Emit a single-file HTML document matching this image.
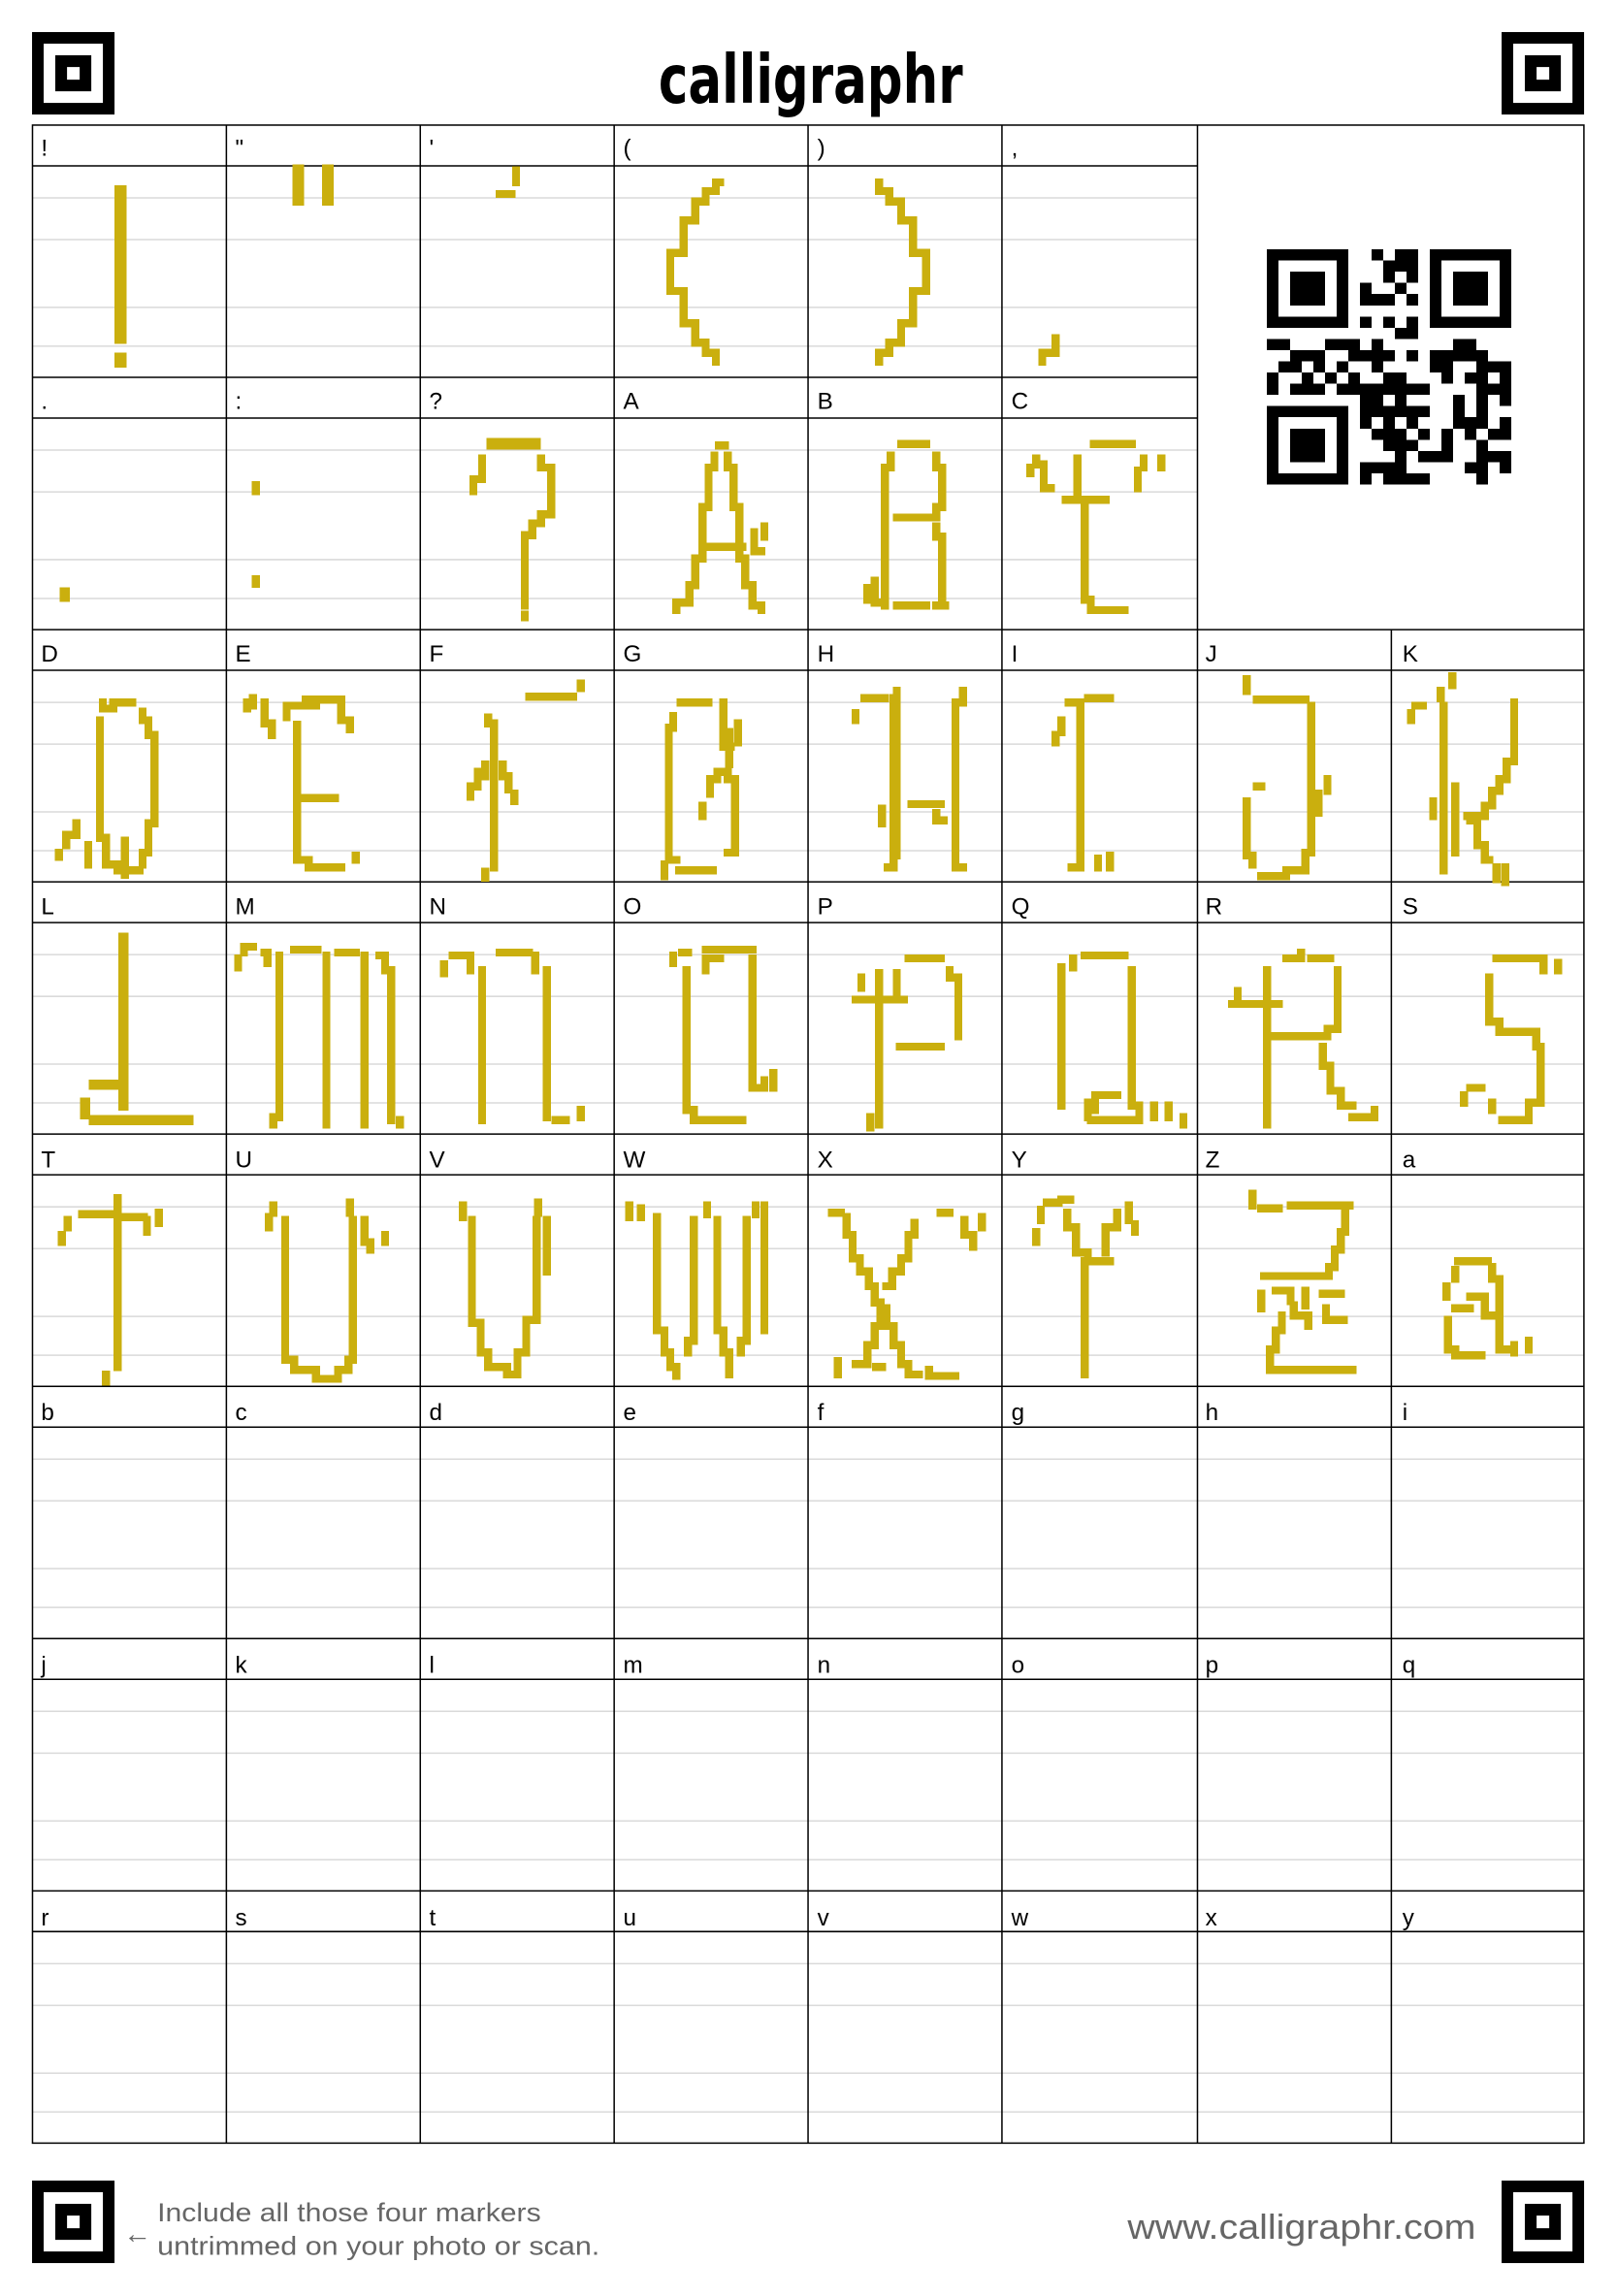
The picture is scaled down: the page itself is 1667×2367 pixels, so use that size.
<!DOCTYPE html>
<html><head><meta charset="utf-8"><style>
html,body{margin:0;padding:0;background:#fff}
svg{display:block}
text{font-family:"Liberation Sans","DejaVu Sans",sans-serif}
</style></head><body>
<svg width="1667" height="2367" viewBox="0 0 1100 1561.9" xmlns="http://www.w3.org/2000/svg">
<defs>
<g id="mk">
<rect x="0" y="0" width="56.1" height="56.1" fill="#000"/>
<rect x="7.9" y="7.9" width="40.3" height="40.3" fill="#fff"/>
<rect x="15.8" y="15.8" width="24.5" height="24.5" fill="#000"/>
<rect x="23.8" y="23.8" width="8.6" height="8.6" fill="#fff"/>
</g>
</defs>
<use href="#mk" x="21.8" y="21.8"/>
<use href="#mk" x="1021.5" y="21.8"/>
<use href="#mk" x="21.8" y="1483.4"/>
<use href="#mk" x="1021.5" y="1483.4"/>

<!-- logo -->
<text x="448" y="70" font-size="46" font-weight="bold" textLength="207" lengthAdjust="spacingAndGlyphs" style="font-family:'DejaVu Sans Condensed','Liberation Sans Narrow',sans-serif">calligraphr</text>

<g stroke="#dadada" stroke-width="1">
<path d="M22.1 134.6H814.6M22.1 163H814.6M22.1 209.1H814.6M22.1 235.5H814.6
M22.1 306.2H814.6M22.1 334.6H814.6M22.1 380.7H814.6M22.1 407.1H814.6
M22.1 477.8H1077.5M22.1 506.2H1077.5M22.1 552.3H1077.5M22.1 578.7H1077.5
M22.1 649.4H1077.5M22.1 677.8H1077.5M22.1 723.9H1077.5M22.1 750.3H1077.5
M22.1 821H1077.5M22.1 849.4H1077.5M22.1 895.5H1077.5M22.1 921.9H1077.5
M22.1 992.6H1077.5M22.1 1021H1077.5M22.1 1067.1H1077.5M22.1 1093.5H1077.5
M22.1 1164.2H1077.5M22.1 1192.6H1077.5M22.1 1238.7H1077.5M22.1 1265.1H1077.5
M22.1 1335.8H1077.5M22.1 1364.2H1077.5M22.1 1410.3H1077.5M22.1 1436.7H1077.5"/>
</g>
<g stroke="#000" stroke-width="1" fill="none">
<rect x="22.1" y="85.1" width="1055.4" height="1372.8"/>
<path d="M22.1 112.8H814.6M22.1 256.7H814.6M22.1 284.4H814.6
M22.1 428.3H1077.5M22.1 456H1077.5M22.1 599.9H1077.5M22.1 627.6H1077.5
M22.1 771.5H1077.5M22.1 799.2H1077.5M22.1 943.1H1077.5M22.1 970.8H1077.5
M22.1 1114.7H1077.5M22.1 1142.4H1077.5M22.1 1286.3H1077.5M22.1 1314H1077.5"/>
<path d="M154 85.1V1457.9M285.9 85.1V1457.9M417.8 85.1V1457.9M549.7 85.1V1457.9M681.6 85.1V1457.9M814.6 85.1V1457.9M946.5 428.3V1457.9"/>
</g>

<g font-size="16" fill="#000">
<text x="28" y="106">!</text><text x="160" y="106">"</text><text x="292" y="106">'</text><text x="424" y="106">(</text><text x="556" y="106">)</text><text x="688" y="106">,</text>
<text x="28" y="278">.</text><text x="160" y="278">:</text><text x="292" y="278">?</text><text x="424" y="278">A</text><text x="556" y="278">B</text><text x="688" y="278">C</text>
<text x="28" y="450">D</text><text x="160" y="450">E</text><text x="292" y="450">F</text><text x="424" y="450">G</text><text x="556" y="450">H</text><text x="688" y="450">I</text><text x="820" y="450">J</text><text x="954" y="450">K</text>
<text x="28" y="622">L</text><text x="160" y="622">M</text><text x="292" y="622">N</text><text x="424" y="622">O</text><text x="556" y="622">P</text><text x="688" y="622">Q</text><text x="820" y="622">R</text><text x="954" y="622">S</text>
<text x="28" y="794">T</text><text x="160" y="794">U</text><text x="292" y="794">V</text><text x="424" y="794">W</text><text x="556" y="794">X</text><text x="688" y="794">Y</text><text x="820" y="794">Z</text><text x="954" y="794">a</text>
<text x="28" y="966">b</text><text x="160" y="966">c</text><text x="292" y="966">d</text><text x="424" y="966">e</text><text x="556" y="966">f</text><text x="688" y="966">g</text><text x="820" y="966">h</text><text x="954" y="966">i</text>
<text x="28" y="1138">j</text><text x="160" y="1138">k</text><text x="292" y="1138">l</text><text x="424" y="1138">m</text><text x="556" y="1138">n</text><text x="688" y="1138">o</text><text x="820" y="1138">p</text><text x="954" y="1138">q</text>
<text x="28" y="1310">r</text><text x="160" y="1310">s</text><text x="292" y="1310">t</text><text x="424" y="1310">u</text><text x="556" y="1310">v</text><text x="688" y="1310">w</text><text x="820" y="1310">x</text><text x="954" y="1310">y</text>
</g>

<svg x="861.8" y="169.6" width="166.3" height="160" viewBox="0 0 21 21" preserveAspectRatio="none" shape-rendering="crispEdges">
<g fill="#000">
<path d="M0 0h7v7h-7zM1 1v5h5v-5zM2 2h3v3h-3z" fill-rule="evenodd"/>
<path d="M14 0h7v7h-7zM15 1v5h5v-5zM16 2h3v3h-3z" fill-rule="evenodd"/>
<path d="M0 14h7v7h-7zM1 15v5h5v-5zM2 16h3v3h-3z" fill-rule="evenodd"/>
<path d="M9 0h1v1h-1zM11 0h2v1h-2zM10 1h3v1h-3zM10 2h1v1h-1zM12 2h1v1h-1zM8 3h1v1h-1zM11 3h1v1h-1zM8 4h3v1h-3zM12 4h1v1h-1z
M8 6h1v1h-1zM10 6h1v1h-1zM12 6h1v1h-1zM11 7h2v1h-2z
M0 8h2v1h-2zM5 8h3v1h-3zM9 8h1v1h-1zM16 8h2v1h-2z
M2 9h3v1h-3zM7 9h4v1h-4zM12 9h1v1h-1zM14 9h5v1h-5z
M1 10h2v1h-2zM4 10h1v1h-1zM6 10h1v1h-1zM9 10h1v1h-1zM14 10h2v1h-2zM18 10h3v1h-3z
M0 11h1v1h-1zM3 11h1v1h-1zM5 11h1v1h-1zM7 11h1v1h-1zM10 11h2v1h-2zM15 11h1v1h-1zM17 11h2v1h-2zM20 11h1v1h-1z
M0 12h1v1h-1zM2 12h3v1h-3zM6 12h8v1h-8zM18 12h3v1h-3z
M8 13h2v1h-2zM11 13h1v1h-1zM16 13h1v1h-1zM18 13h1v1h-1zM20 13h1v1h-1z
M8 14h6v1h-6zM16 14h1v1h-1zM18 14h1v1h-1z
M8 15h1v1h-1zM10 15h1v1h-1zM12 15h1v1h-1zM16 15h3v1h-3zM20 15h1v1h-1z
M9 16h3v1h-3zM13 16h1v1h-1zM15 16h1v1h-1zM17 16h1v1h-1zM19 16h2v1h-2z
M10 17h3v1h-3zM15 17h1v1h-1zM18 17h1v1h-1z
M11 18h1v1h-1zM13 18h3v1h-3zM18 18h3v1h-3z
M8 19h4v1h-4zM17 19h2v1h-2zM20 19h1v1h-1z
M8 20h1v1h-1zM10 20h4v1h-4zM18 20h1v1h-1z"/>
</g>
</svg>

<g fill="none" stroke="#caaf0e" stroke-width="5.5" stroke-linecap="square" stroke-linejoin="miter" shape-rendering="crispEdges">
<path d="M82 130V230" stroke-width="8"/><path d="M82 244V246" stroke-width="8"/>
<path d="M203 116V136M223 116V136" stroke-width="8"/>
<path d="M351 116V124M340 132H348"/>
<path d="M490 124H487V130H480V137H473V150H465V172H456V198H465V220H473V233H480V240H487V246"/>
<path d="M598 124V130H605V137H613V150H621V172H630V198H621V220H613V233H605V240H598V246"/>
<path d="M718 230V240H709V246"/>
<path d="M44 403V406" stroke-width="7"/>
<path d="M174 330V334M174 394V397"/>
<path d="M335 302H364" stroke-width="8"/><path d="M328 312V326H322V334M368 312V318H375V350H368V356H362V364H357V412M357 418V420"/>
<path d="M489 303H493M486 310V318H482V345H478V380H473V398H469V410H460V415M495 310V318H499V345H503V380H507V398H512V412H518V415M478 372H505M473 385V380M513 362V375H518M520 358V365"/>
<path d="M613 302H630M606 310V318H602V412M637 310V318H641V345H637V352H610M637 358V365H641V412M610 412H630M637 412H643M590 400V408M595 395V410H602" />
<path d="M744 302H770M701 318V322M705 312V316H710V332H715M733 312V340H738V408H742V415H765M778 312V318M790 312V318M774 320V332M725 340H752" />
<path d="M70 478V482H77V478H90M97 484V490H101V500H105V560H101V580H97V588M68 490V570H72V588H80V592H95M85 572V595M45 575V568H52V560M40 580V583M60 575V588"/>
<path d="M168 478V482M172 475V480M180 478V492H185V500M195 488V480M200 480H215M208 476H232M232 480V490H238V496M202 493V560M202 563V585H210V590H232M242 585V582M205 543H228" />
<path d="M360 474H390M395 468V465M332 488V492H336V590M330 593V597M325 525V535M330 520V528M320 535V542M342 520V528H346V537M350 545V540"/>
<path d="M463 478H482M458 487V495H455V585H460M452 588V596M462 592H485M492 478V508H497M502 492V505M496 520V498M483 540V530H488V525H495V530H500V580H495M478 548V555"/>
<path d="M588 475H602M582 485V490M608 475V590H604M610 470V582M620 547H640M600 550V560M637 553V558H642M655 470V478H650V590H655"/>
<path d="M727 478H735M740 475H755M722 490V498M718 500V505M735 480V590H729M747 590V584M755 582V590"/>
<path d="M848 462V470M855 476H888M892 480V580H888V592H875V596H858M852 588V582H848V545M855 535H858M897 553V540M903 538V530"/>
<path d="M963 480H968M960 485V490M980 470V475M982 480V592M988 460V466M1030 478V518H1025V530H1020V538H1015V548H1010V555H998M975 555V545M990 535V580M1000 558H1005V575H1010V585H1013M1018 590V598M1024 590V600"/>
<path d="M84 638V752M84 738H64M58 750V758M64 762H128" stroke-width="7"/>
<path d="M162 652V658M166 648V644H172M180 648H182V655M190 650V760M186 760V765M200 646H216M222 650V765M230 648H242M248 650V765M258 650H262V660M266 660V762M272 762V765"/>
<path d="M302 656V662M308 650H316M320 650V660M328 660V762M340 648H360M364 650V660M372 660V760M378 762H385M395 755V760"/>
<path d="M458 650V655M464 648H468M467 660V755H472V762H505M480 646H512M490 652H480V660M512 652V740H520V735M526 730V740"/>
<path d="M598 662V765M592 760V767M582 680H615M610 662V675M618 652H640M646 660V665H652V705M612 712H640M586 672V665"/>
<path d="M722 658V752M738 650H765M730 652V658M770 660V752H775V762H742M745 755V745H760M740 760V750M785 752V760M795 752V760M805 760V765"/>
<path d="M838 683H870M842 674V678M862 660V765M875 652H885V648M892 652H905M910 660V700H903V705H865M900 712V725H905V742H912V752H920M920 760H935M935 755V760"/>
<path d="M1018 652H1045M1050 652V660M1060 655V660M1013 665V695H1020V702H1045V712H1048V750H1040V762H1022M1015 755V750M1000 740H1008M996 745V750"/>
<path d="M42 840V845M46 830V835M56 826H75M80 815V930M72 935V940M85 828H98M100 830V838M108 825V832"/>
<path d="M183 828V835M186 820V825M194 830V925H200V932H215V938H230V932H237V925H240V830M238 818V825M248 830V845H252V850M262 840V845"/>
<path d="M315 820V828M321 830V900H327V920H332V930H345V935H352V920H358V898H365V830M366 818V825M372 830V865"/>
<path d="M428 820V828M436 822V828M447 828V905H452V920H456V930H460V936M468 920V912H472V905V830M481 820V826M488 830V905H492V920H496V935M504 920V912H508V905V830M514 820V826M520 905V820"/>
<path d="M566 825H572M576 828V840H580V856H585V865H591V875H595V886H599V902H595V915H590V928H582M570 926V935M596 930H600M640 825H646M622 832V840H618V856H613V865H607V875H603M603 890V902H608V915H613V928H618V935H625M632 932V936H650M656 830V840H662V848M668 828V835"/>
<path d="M705 838V845M708 823V830M712 818H720M722 816H728M726 825V835H732V852H740V858H755M738 858V935M760 825V835H752V852M768 820V830M772 833V838"/>
<path d="M852 812V820M858 822H870M878 820H918M915 825V838H912V850H908V862H904V868H860M868 878H878V885M888 878V888M858 880V890M880 888V895H890V902M900 880H912M902 890V898H914M872 895V905H868V918H864V932H920"/>
<path d="M992 858H1012M990 864V870M984 875V882M1015 862V870H1020V918H1025M990 890H1000M1000 882H1010V895H1015M985 898V918H990V922H1008M1030 915V920M1040 912V918"/>
</g>

<text x="84" y="1526" font-size="19" fill="#666">←</text>
<text x="107" y="1511" font-size="18" fill="#666" textLength="261" lengthAdjust="spacingAndGlyphs">Include all those four markers</text>
<text x="107" y="1534" font-size="18" fill="#666" textLength="301" lengthAdjust="spacingAndGlyphs">untrimmed on your photo or scan.</text>
<text x="767" y="1523" font-size="24" fill="#666" textLength="237" lengthAdjust="spacingAndGlyphs">www.calligraphr.com</text>
</svg>
</body></html>
